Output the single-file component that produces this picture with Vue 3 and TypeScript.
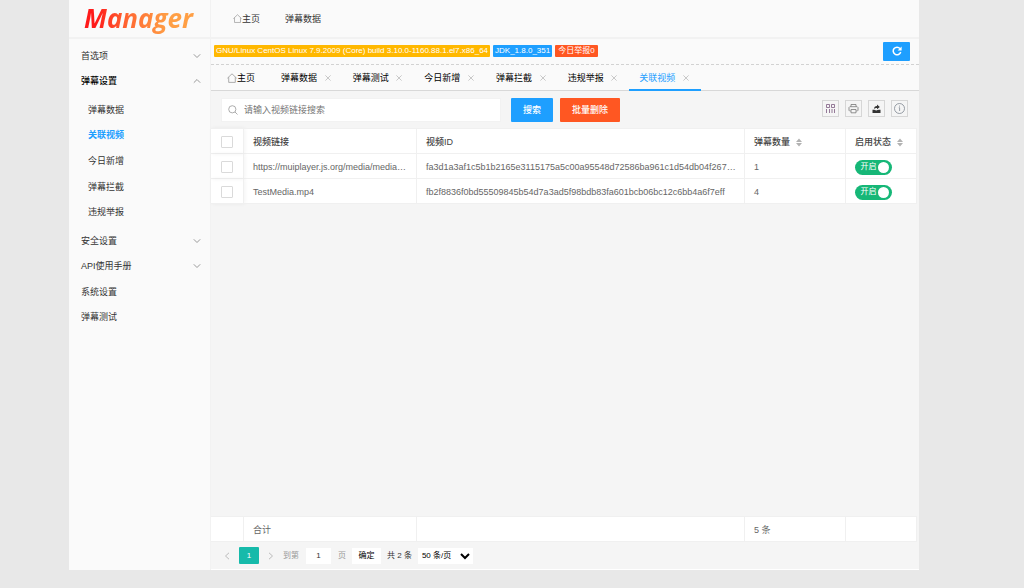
<script setup lang="ts">
import { ref } from 'vue'

interface MenuItem { label: string; arrow?: 'up' | 'down' }
interface VideoRow { link: string; id: string; count: number; on: boolean; picked: boolean }

const topMenu: MenuItem[] = [{ label: '首选项', arrow: 'down' }, { label: '弹幕设置', arrow: 'up' }]
const subMenu = ['弹幕数据', '关联视频', '今日新增', '弹幕拦截', '违规举报']
const endMenu: MenuItem[] = [
  { label: '安全设置', arrow: 'down' },
  { label: 'API使用手册', arrow: 'down' },
  { label: '系统设置' },
  { label: '弹幕测试' },
]
const tabs = ['弹幕数据', '弹幕测试', '今日新增', '弹幕拦截', '违规举报', '关联视频']
const active = ref('关联视频')
const keyword = ref('')
const page = ref('1')
const allPicked = ref(false)
const rows = ref<VideoRow[]>([
  {
    link: 'https://muiplayer.js.org/media/media.mp4',
    id: 'fa3d1a3af1c5b1b2165e3115175a5c00a95548d72586ba961c1d54db04f267a9c1',
    count: 1, on: true, picked: false,
  },
  {
    link: 'TestMedia.mp4',
    id: 'fb2f8836f0bd55509845b54d7a3ad5f98bdb83fa601bcb06bc12c6bb4a6f7eff',
    count: 4, on: true, picked: false,
  },
])
</script>

<template>
  <div class="app">
    <aside class="side">
      <div class="brand"><span class="logo">Manager</span></div>
      <nav class="menu" aria-label="侧栏">
        <ul class="group two">
          <li v-for="m in topMenu" :key="m.label">
            <a href="#" :class="{ open: m.arrow === 'up' }">{{ m.label }}
              <svg class="arrow" :class="m.arrow" viewBox="0 0 8 8"><path d="M.8 2.3 4 5.5 7.2 2.3" /></svg>
            </a>
          </li>
        </ul>
        <ul class="group sub">
          <li v-for="s in subMenu" :key="s">
            <a href="#" :class="{ current: s === active }">{{ s }}</a>
          </li>
        </ul>
        <ul class="group four">
          <li v-for="m in endMenu" :key="m.label">
            <a href="#">{{ m.label }}
              <svg v-if="m.arrow" class="arrow" viewBox="0 0 8 8"><path d="M.8 2.3 4 5.5 7.2 2.3" /></svg>
            </a>
          </li>
        </ul>
      </nav>
    </aside>

    <main class="main">
      <header class="top">
        <a href="#"><svg class="home small" viewBox="0 0 10 10"><path d="M.4 5.2 5 .8l4.6 4.4M1.7 4.2v5.2h6.6V4.2" /></svg>主页</a>
        <a href="#">弹幕数据</a>
      </header>

      <div class="status">
        <span class="badge amber">GNU/Linux CentOS Linux 7.9.2009 (Core) build 3.10.0-1160.88.1.el7.x86_64</span>
        <span class="badge blue">JDK_1.8.0_351</span>
        <span class="badge red">今日举报0</span>
        <button class="refresh" type="button" aria-label="刷新">
          <svg viewBox="0 0 10 10"><path class="ring" d="M8 2.6A3.8 3.8 0 1 0 8.7 6" /><path class="tip" d="M9.6.6v4H5.6z" /></svg>
        </button>
      </div>

      <div class="tabs">
        <a class="home-tab" href="#"><svg class="home" viewBox="0 0 10 10"><path d="M.4 5.2 5 .8l4.6 4.4M1.7 4.2v5.2h6.6V4.2" /></svg>主页</a>
        <div class="opened">
          <div v-for="t in tabs" :key="t" class="tab" :class="{ current: t === active }">
            <a href="#" @click.prevent="active = t">{{ t }}</a>
            <button type="button" :aria-label="'关闭' + t"><svg viewBox="0 0 6 6"><path d="M.4.4l5.2 5.2M5.6.4.4 5.6" /></svg></button>
          </div>
        </div>
      </div>

      <form class="tools" @submit.prevent>
        <label class="search">
          <svg viewBox="0 0 10 10"><circle cx="4.3" cy="4.3" r="3.6" /><path d="M7 7l2.5 2.5" /></svg>
          <input v-model="keyword" type="text" placeholder="请输入视频链接搜索" aria-label="视频链接" />
        </label>
        <button class="btn find" type="submit">搜索</button>
        <button class="btn remove" type="button">批量删除</button>
        <div class="icons">
          <button type="button" aria-label="筛选列">
            <svg viewBox="0 0 11 11"><path class="plum" d="M1.5 1.500h3v3h-3zM6.500 1.500h3v3h-3zM1.500 6v4M4.500 6v4M7 6v4M9.500 6v4" /></svg>
          </button>
          <button type="button" aria-label="打印">
            <svg viewBox="0 0 11 11"><path d="M3 3.500V1.500h5v2M2.600 8H1.700L1 7.300V4.500l.8-.8h7.400l.8.8v2.800l-.7.700h-.9M3 6.500h5v3.300H3z" /></svg>
          </button>
          <button type="button" aria-label="导出">
            <svg viewBox="0 0 11 11"><path class="dark" d="M1.500 6.800h2c.4.800 3.600.8 4 0h2v3.200h-8zM3 6c.1-2 1.100-2.900 3-3V1.500l2.800 2.400L6 6.200V5C4.700 5 3.800 5.300 3 6z" /></svg>
          </button>
          <button type="button" aria-label="提示">
            <svg viewBox="0 0 11 11"><circle class="info" cx="5.500" cy="5.500" r="5" /><path class="info" d="M4.800 4.700h.8v3.300M5.500 2.600v1" /></svg>
          </button>
        </div>
      </form>

      <div class="grid">
        <table>
          <colgroup><col class="c1" /><col class="c2" /><col /><col class="c4" /><col class="c5" /></colgroup>
          <thead>
            <tr>
              <th class="pick"><input v-model="allPicked" type="checkbox" aria-label="全选" /></th>
              <th>视频链接</th>
              <th>视频ID</th>
              <th>弹幕数量<svg class="sort" viewBox="0 0 6 9"><path d="M0 4 3 .5 6 4zM0 5l3 3.500L6 5z" /></svg></th>
              <th>启用状态<svg class="sort" viewBox="0 0 6 9"><path d="M0 4 3 .5 6 4zM0 5l3 3.500L6 5z" /></svg></th>
            </tr>
          </thead>
          <tbody>
            <tr v-for="r in rows" :key="r.id">
              <td class="pick"><input v-model="r.picked" type="checkbox" :aria-label="'选择' + r.link" /></td>
              <td>{{ r.link }}</td>
              <td>{{ r.id }}</td>
              <td>{{ r.count }}</td>
              <td>
                <label class="switch" :class="{ on: r.on }"><input v-model="r.on" type="checkbox" /><span>{{ r.on ? '开启' : '关闭' }}</span><i /></label>
              </td>
            </tr>
          </tbody>
        </table>
      </div>

      <table class="total">
        <colgroup><col class="c1" /><col class="c2" /><col /><col class="c4" /><col class="c5" /></colgroup>
        <tbody><tr><td></td><td>合计</td><td></td><td>5 条</td><td></td></tr></tbody>
      </table>

      <footer class="pager">
        <button class="step" type="button" aria-label="上一页"><svg viewBox="0 0 6 8"><path d="M5 .8 1.500 4 5 7.200" /></svg></button>
        <button class="num" type="button">1</button>
        <button class="step" type="button" aria-label="下一页"><svg viewBox="0 0 6 8"><path d="M1 .8 4.500 4 1 7.200" /></svg></button>
        <label class="jump"><span>到第</span><input v-model="page" type="text" /><span>页</span></label>
        <button class="ok" type="button">确定</button>
        <span class="count">共 2 条</span>
        <select aria-label="每页条数"><option>50 条/页</option><option>100 条/页</option></select>
      </footer>
    </main>
  </div>
</template>

<style>
body { margin: 0; background: #e8e8e8; }
</style>

<style scoped>
.app, .app * { box-sizing: border-box; }
.app {
  display: flex;
  height: calc(100vh - 18px);
  margin: 0 105px 0 69px;
  background: #f5f5f5;
  color: #333;
  font: 9px/14px "Liberation Sans", "Noto Sans CJK SC", sans-serif;
}
a { color: inherit; text-decoration: none; }
button, input, select { margin: 0; padding: 0; border: 0; font: inherit; color: inherit; outline: none; }
button { cursor: pointer; background: none; }
svg { fill: none; stroke: #999; flex: none; }

.side { flex: none; width: 142px; background: #fafafa; border-right: 1px solid #f2f2f2; }
.brand { height: 39px; padding-left: 15px; border-bottom: 2px solid #f2f2f2; }
.logo {
  display: inline-block;
  padding-right: 3px;
  font: italic bold 26px/36px "Open Sans", "Noto Sans", sans-serif;
  background: linear-gradient(90deg, #ff1a1a 10%, #ff6a33 40%, #ff9f45 75%);
  -webkit-background-clip: text;
  background-clip: text;
  color: transparent;
}
.menu { display: flex; flex-direction: column; gap: 3px; padding-top: 4px; }
.group { display: grid; grid-auto-rows: 1fr; margin: 0; padding: 0; list-style: none; }
.two { height: 51px; }
.sub { height: 128px; }
.four { height: 102px; }
.group a { display: flex; align-items: center; justify-content: space-between; height: 100%; padding: 0 9px 0 12px; }
.sub a { padding-left: 19px; }
.open { color: #000; font-weight: 500; }
.sub .current { color: #1e9fff; font-weight: 700; }
.arrow { width: 8px; height: 8px; }
.arrow.up { transform: rotate(180deg); }

.main { flex: 1; min-width: 0; display: flex; flex-direction: column; border-bottom: 1px solid #fff; }
.top { display: flex; align-items: center; gap: 25px; height: 39px; padding-left: 22px; background: #fafafa; border-bottom: 2px solid #f2f2f2; }
.top a { display: flex; align-items: center; }
.home { width: 10px; height: 10px; stroke-width: .8; }
.home.small { width: 9px; height: 9px; }

.status { display: flex; align-items: center; gap: 3px; height: 26px; padding: 0 9px 0 3px; background: #fafafa; border-bottom: 1px dashed #d2d2d2; }
.badge { height: 12px; margin-bottom: 1px; padding: 0 2px; border-radius: 1px; color: #fff; font-size: 8px; line-height: 12px; white-space: nowrap; }
.amber { background: #ffb800; }
.blue { background: #1e9fff; }
.red { padding: 0 3px; background: #ff5722; }
.refresh { display: flex; align-items: center; justify-content: center; width: 27px; height: 19px; margin: 0 0 1px auto; border-radius: 1px; background: #1e9fff; }
.refresh svg { width: 10px; height: 10px; }
.ring { stroke: #fff; stroke-width: 1.5; }
.tip { fill: #fff; stroke: none; }

.tabs { display: flex; height: 26px; padding-left: 6px; background: #fafafa; box-shadow: inset 0 -1px #d8d8d8; color: #000; }
.home-tab { display: flex; align-items: center; width: 54px; padding-left: 10px; }
.opened { display: flex; flex: 0 1 430px; }
.tab { flex: 1; display: flex; align-items: center; justify-content: space-between; padding: 2px 12px 0 10px; border-bottom: 2px solid transparent; }
.tab.current { color: #1e9fff; border-bottom-color: #1e9fff; }
.tab button { display: flex; }
.tab button svg { width: 6px; height: 6px; stroke: #bbb; stroke-width: .8; }

.tools { display: flex; align-items: center; height: 37px; padding: 0 11px 0 10px; }
.search { display: flex; align-items: center; gap: 6px; flex: 0 1 280px; height: 24px; padding-left: 6px; background: #fff; border: 1px solid #f2f2f2; }
.search svg { width: 10px; height: 10px; stroke-width: .8; }
.search input { flex: 1; min-width: 0; background: none; }
.search input::placeholder { color: #757575; }
.btn { height: 24px; padding-top: 1px; border-radius: 1px; color: #fff; font-weight: 500; }
.find { width: 42px; margin-left: 10px; background: #1e9fff; }
.remove { width: 60px; margin-left: 7px; background: #ff5722; }
.icons { display: flex; gap: 6px; margin: 0 0 2px auto; }
.icons button { display: flex; align-items: center; justify-content: center; width: 17px; height: 17px; border: 1px solid #d6d6d6; }
.icons svg { width: 11px; height: 11px; stroke: #777; stroke-width: .8; }
.icons .plum { stroke: #7c5a80; }
.icons .dark { fill: #333; stroke: none; }
.icons .info { stroke: #7f8790; }

.grid { flex: 1; min-height: 0; padding-right: 2px; }
table { width: 100%; table-layout: fixed; border-collapse: separate; border-spacing: 0; background: #fff; color: #666; }
.c1 { width: 33px; }
.c2 { width: 173px; }
.c4 { width: 101px; }
.c5 { width: 71px; }
th, td { height: 25px; padding: 2px 8px 0 9px; border: solid #f0f0f0; border-width: 0 1px 1px 0; text-align: left; font-weight: 400; overflow: hidden; text-overflow: ellipsis; white-space: nowrap; }
th { height: 26px; border-top-width: 1px; color: #444; font-weight: 500; }
.pick { box-shadow: 1px 0 4px rgba(0, 0, 0, .05); }
.pick input { display: block; appearance: none; width: 12px; height: 12px; border: 1px solid #dadada; border-radius: 1px; background: #fff; margin-left: 1px; }
.pick input:checked { background: #16b777; }
.sort { width: 6px; height: 9px; margin-left: 6px; vertical-align: middle; fill: #b2b2b2; stroke: none; }
.switch { display: flex; align-items: center; justify-content: space-between; width: 37px; height: 15px; padding: 0 3px 0 4px; border-radius: 8px; background: #d2d2d2; color: #fff; font-size: 8px; }
.switch.on { background: #16b777; }
.switch input { appearance: none; width: 0; height: 0; }
.switch i { width: 11px; height: 11px; border-radius: 50%; background: #fff; }
.total { width: calc(100% - 2px); }
.total td { border-top-width: 1px; height: 26px; }

.pager { display: flex; align-items: center; height: 27px; padding-left: 10px; font-size: 8px; }
.step { display: flex; justify-content: center; width: 12px; }
.step svg { width: 6px; height: 8px; stroke: #bbb; }
.num { width: 20px; height: 17px; margin: 0 6px; border-radius: 1px; background: #16baaa; color: #fff; }
.jump { display: flex; align-items: center; gap: 7px; margin-left: 6px; color: #999; }
.jump input { width: 25px; height: 16px; background: #fff; text-align: center; color: #333; }
.ok { width: 29px; height: 16px; margin: 0 6px; background: #fff; color: #000; }
.count { white-space: nowrap; }
.pager select { width: 55px; height: 16px; margin-left: 6px; background: #fff; color: #000; }
</style>
